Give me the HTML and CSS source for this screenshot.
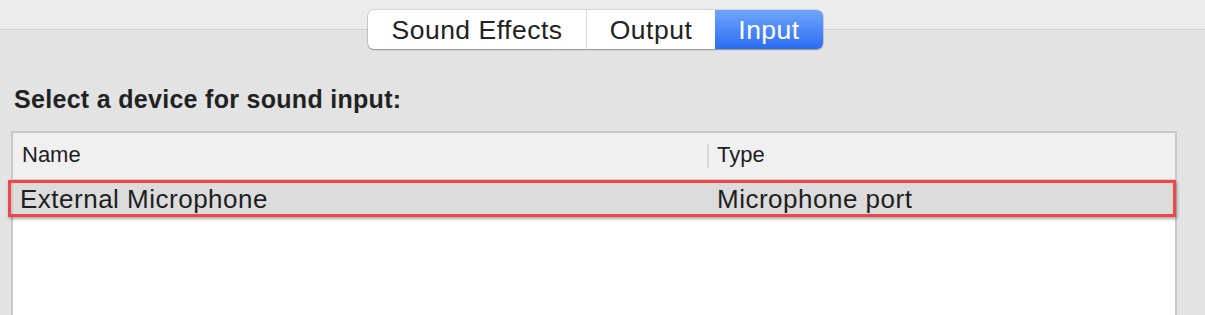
FILE: index.html
```html
<!DOCTYPE html>
<html>
<head>
<meta charset="utf-8">
<link rel="stylesheet" href="styles.css">
</head>
<body>
<div class="top">
  <div class="seg">
    <div class="tab tab-effects">Sound Effects</div>
    <div class="tab tab-output">Output</div>
    <div class="tab tab-input">Input</div>
  </div>
</div>
<h1 class="heading">Select a device for sound input:</h1>
<div class="table">
  <div class="thead">
    <div class="th th-name">Name</div>
    <div class="th th-type"><span class="divider"></span>Type</div>
  </div>
  <div class="row selected">
    <div class="td td-name">External Microphone</div>
    <div class="td td-type">Microphone port</div>
  </div>
</div>
</body>
</html>
```

FILE: styles.css
```css
html, body {
  margin: 0;
  padding: 0;
}
body {
  width: 1205px;
  height: 315px;
  overflow: hidden;
  background: #e3e3e3;
  font-family: "Liberation Sans", Arial, sans-serif;
  color: #222;
}
.top {
  padding: 10px 0 0 368px;
  background: linear-gradient(to bottom, #ececec 0, #ececec 29px, #d4d4d4 29px, #d4d4d4 30px, transparent 30px);
}
.seg {
  display: flex;
  width: 455px;
  height: 39px;
  border-radius: 6px;
  overflow: hidden;
  background: #fff;
  box-shadow: 0 0 0 0.5px rgba(0,0,0,0.18), 0 1px 1.5px rgba(0,0,0,0.3);
}
.tab {
  box-sizing: border-box;
  height: 39px;
  padding-top: 1px;
  line-height: 38px;
  font-size: 26.5px;
  letter-spacing: 0.5px;
  text-align: center;
  color: #222;
}
.tab-effects { width: 218px; }
.tab-output { width: 129px; border-left: 1px solid #dadada; }
.tab-input {
  width: 108px;
  color: #fff;
  background: linear-gradient(to bottom, #6fa5f9, #2b6cf5);
}
.heading {
  margin: 36px 0 0 14px;
  font-size: 25px;
  line-height: 28px;
  letter-spacing: 0.3px;
  font-weight: bold;
  color: #222;
}
.table {
  box-sizing: border-box;
  margin: 18px 0 0 11px;
  width: 1166px;
  height: 184px;
  background: #fff;
  border: 2px solid #c9c9c9;
  border-bottom: none;
}
.thead {
  display: grid;
  grid-template-columns: 694px 1fr;
  height: 46px;
  border-bottom: 1px solid #d3d3d3;
  background: #f0f0f0;
}
.th {
  font-size: 22px;
  line-height: 44px;
  padding-bottom: 2px;
  color: #1e1e1e;
}
.th-name { padding-left: 9px; }
.th-type {
  display: flex;
  align-items: center;
}
.divider {
  display: block;
  width: 2px;
  height: 24px;
  margin: 2px 8px 0 0;
  background: #d9d9d9;
}
.row {
  position: relative;
  display: grid;
  grid-template-columns: 694px 1fr;
  height: 36px;
  background: #dcdcdc;
}
.td {
  box-sizing: border-box;
  padding-top: 2px;
  font-size: 26px;
  line-height: 34px;
  letter-spacing: 0.5px;
  color: #1e1e1e;
}
.td-name { padding-left: 7px; }
.td-type { padding-left: 10px; }
.selected::after {
  content: "";
  position: absolute;
  left: -5px;
  top: 0;
  right: -1px;
  bottom: -1px;
  border: 3.5px solid #f04549;
  box-shadow: 1px 2px 3px rgba(0,0,0,0.35);
  pointer-events: none;
}
```
